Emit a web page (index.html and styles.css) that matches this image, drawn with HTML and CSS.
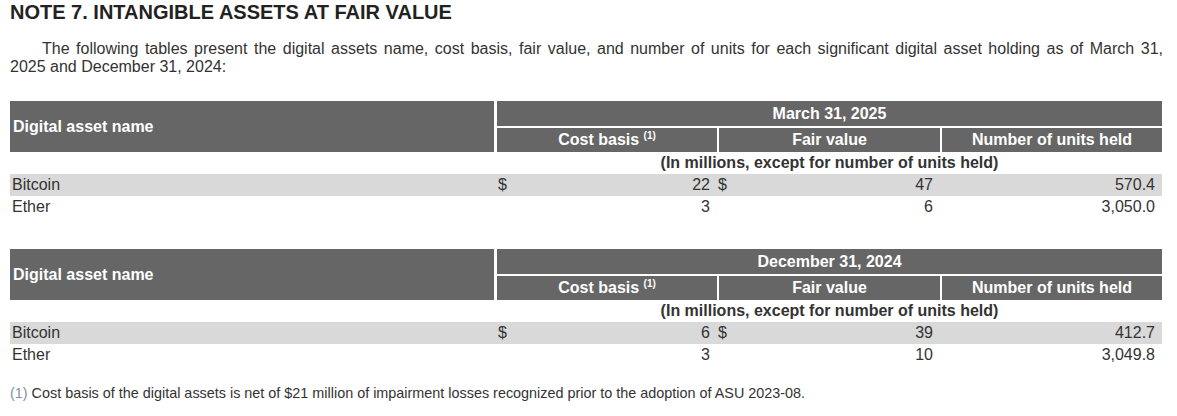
FILE: index.html
```html
<!DOCTYPE html>
<html>
<head>
<meta charset="utf-8">
<link rel="stylesheet" href="styles.css">
</head>
<body>
<div class="page">
  <h1 class="title">NOTE 7. INTANGIBLE ASSETS AT FAIR VALUE</h1>
  <p class="intro">The following tables present the digital assets name, cost basis, fair value, and number of units for each significant digital asset holding as of March 31, <span class="keep">2025 and December 31, 2024:</span></p>

  <table class="assets">
    <colgroup>
      <col class="c-name"><col class="c-cost"><col class="c-fair"><col class="c-units">
    </colgroup>
    <thead>
      <tr class="h1">
        <th class="name-h" rowspan="2">Digital asset name</th>
        <th class="period" colspan="3">March 31, 2025</th>
      </tr>
      <tr class="h2">
        <th class="sub first">Cost basis <sup>(1)</sup></th>
        <th class="sub">Fair value</th>
        <th class="sub">Number of units held</th>
      </tr>
    </thead>
    <tbody>
      <tr class="unit-row">
        <td></td>
        <td class="unit-note" colspan="3">(In millions, except for number of units held)</td>
      </tr>
      <tr class="shade">
        <td class="label">Bitcoin</td>
        <td class="num"><span class="cur">$</span>22</td>
        <td class="num"><span class="cur">$</span>47</td>
        <td class="num">570.4</td>
      </tr>
      <tr>
        <td class="label">Ether</td>
        <td class="num">3</td>
        <td class="num">6</td>
        <td class="num">3,050.0</td>
      </tr>
    </tbody>
  </table>

  <table class="assets second">
    <colgroup>
      <col class="c-name"><col class="c-cost"><col class="c-fair"><col class="c-units">
    </colgroup>
    <thead>
      <tr class="h1">
        <th class="name-h" rowspan="2">Digital asset name</th>
        <th class="period" colspan="3">December 31, 2024</th>
      </tr>
      <tr class="h2">
        <th class="sub first">Cost basis <sup>(1)</sup></th>
        <th class="sub">Fair value</th>
        <th class="sub">Number of units held</th>
      </tr>
    </thead>
    <tbody>
      <tr class="unit-row">
        <td></td>
        <td class="unit-note" colspan="3">(In millions, except for number of units held)</td>
      </tr>
      <tr class="shade">
        <td class="label">Bitcoin</td>
        <td class="num"><span class="cur">$</span>6</td>
        <td class="num"><span class="cur">$</span>39</td>
        <td class="num">412.7</td>
      </tr>
      <tr>
        <td class="label">Ether</td>
        <td class="num">3</td>
        <td class="num">10</td>
        <td class="num">3,049.8</td>
      </tr>
    </tbody>
  </table>

  <p class="footnote"><span class="fn-mark">(1)</span> Cost basis of the digital assets is net of $21 million of impairment losses recognized prior to the adoption of ASU 2023-08.</p>
</div>
</body>
</html>
```

FILE: styles.css
```css
html, body {
  margin: 0;
  padding: 0;
  background: #ffffff;
}

.page {
  padding: 0 14px 0 10px;
  font-family: "Liberation Sans", Arial, sans-serif;
  color: #333333;
}

.title {
  margin: 0;
  font-size: 20px;
  line-height: 24px;
  font-weight: bold;
  color: #222222;
}

.intro {
  margin: 16px 0 0 0;
  font-size: 16px;
  line-height: 18px;
  text-indent: 32px;
  text-align: justify;
}

.keep {
  white-space: nowrap;
}

.assets {
  width: 1152px;
  margin-top: 25px;
  border-collapse: separate;
  border-spacing: 0;
  table-layout: fixed;
  font-size: 16px;
}

.assets.second {
  margin-top: 31px;
}

.c-name { width: 487px; }
.c-cost { width: 220px; }
.c-fair { width: 223px; }
.c-units { width: 222px; }

.assets th {
  background: #666666;
  color: #ffffff;
  font-weight: bold;
  padding: 0;
}

.name-h {
  text-align: left;
  padding-left: 3px !important;
  border-right: 3px solid #ffffff;
}

.h1 .period {
  height: 25px;
  text-align: center;
  border-bottom: 2px solid #ffffff;
}

.h2 .sub {
  height: 24px;
  text-align: center;
  border-left: 2px solid #ffffff;
}

.h2 .sub.first {
  border-left: none;
}

.assets sup {
  font-size: 10px;
  line-height: 0;
  vertical-align: top;
  position: relative;
  top: 5px;
}

.assets td {
  padding: 0;
  height: 22px;
}

.unit-note {
  text-align: center;
  font-weight: bold;
  color: #333333;
}

.shade td {
  background: #d9d9d9;
}

.label {
  padding-left: 2px !important;
}

.num {
  text-align: right;
  padding-right: 7px !important;
}

.cur {
  float: left;
  padding-left: 1px;
}

.footnote {
  margin: 19px 0 0 0;
  font-size: 14.4px;
  line-height: 16px;
}

.fn-mark {
  color: #8090a8;
}
```
